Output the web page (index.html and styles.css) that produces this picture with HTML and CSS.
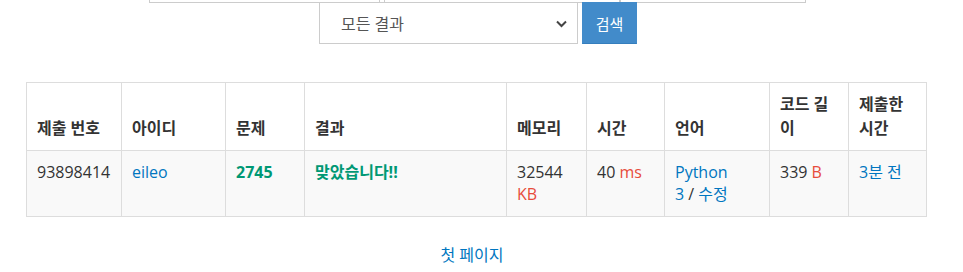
FILE: index.html
```html
<!DOCTYPE html>
<html lang="ko">
<head>
    <meta charset="UTF-8">
    <title>채점 현황</title>
    <link rel="stylesheet" href="styles.css">
</head>
<body>
    <div class="container">
        <div class="filter-row">
            <div class="filter-box box-1"></div>
            <div class="filter-box box-2"></div>
            <div class="filter-box box-3"></div>
        </div>
        <div class="search-row">
            <div class="result-select">
                <span>모든 결과</span>
                <svg class="chevron" width="11" height="8" viewBox="0 0 11 8"><path d="M1 1.5 L5.5 6 L10 1.5" fill="none" stroke="#444" stroke-width="2"/></svg>
            </div>
            <button class="search-btn">검색</button>
        </div>

        <table class="status-table">
            <colgroup>
                <col style="width: 95px">
                <col style="width: 104px">
                <col style="width: 79px">
                <col style="width: 202px">
                <col style="width: 80px">
                <col style="width: 78px">
                <col style="width: 105px">
                <col style="width: 79px">
                <col style="width: 78px">
            </colgroup>
            <thead>
                <tr>
                    <th>제출 번호</th>
                    <th>아이디</th>
                    <th>문제</th>
                    <th>결과</th>
                    <th>메모리</th>
                    <th>시간</th>
                    <th>언어</th>
                    <th>코드 길이</th>
                    <th>제출한 시간</th>
                </tr>
            </thead>
            <tbody>
                <tr>
                    <td>93898414</td>
                    <td><a href="#" class="link">eileo</a></td>
                    <td><a href="#" class="problem">2745</a></td>
                    <td><span class="ac">맞았습니다!!</span></td>
                    <td>32544 <span class="unit">KB</span></td>
                    <td>40 <span class="unit">ms</span></td>
                    <td><a href="#" class="link">Python<br>3</a> / <a href="#" class="link">수정</a></td>
                    <td>339 <span class="unit">B</span></td>
                    <td><a href="#" class="link">3분 전</a></td>
                </tr>
            </tbody>
        </table>

        <div class="pager"><a href="#" class="link">첫 페이지</a></div>
    </div>
</body>
</html>
```

FILE: styles.css
```css
body {
    margin: 0;
    font-family: 'Open Sans', 'Noto Sans CJK KR', sans-serif;
    font-size: 16px;
    color: #333;
    background-color: #fff;
}
.container {
    width: 900px;
    margin-left: 26px;
}
.filter-row {
    display: flex;
    height: 3px;
    margin-left: 123px;
}
.filter-box {
    height: 2px;
    border: 1px solid #ccc;
    border-top: none;
}
.box-1 {
    width: 229px;
}
.box-2 {
    width: 234px;
    margin-left: 4px;
}
.box-3 {
    width: 184px;
}
.search-row {
    display: flex;
    justify-content: center;
    gap: 4px;
    margin-left: 4px;
    height: 42px;
}
.result-select {
    display: flex;
    align-items: center;
    justify-content: space-between;
    box-sizing: border-box;
    width: 259px;
    height: 42px;
    margin-top: -1px;
    padding: 0 10px 0 21px;
    border: 1px solid #ccc;
    color: #555;
    font-size: 16px;
}
.chevron {
    margin-top: 1px;
}
.search-btn {
    width: 55px;
    height: 42px;
    margin-top: -1px;
    padding: 0;
    background-color: #428bca;
    border: 1px solid #428bca;
    border-bottom-color: #357ebd;
    color: #fff;
    font-family: 'Noto Sans CJK KR', sans-serif;
    font-size: 15px;
}
.status-table {
    width: 900px;
    margin-top: 37px;
    border-collapse: collapse;
    table-layout: fixed;
}
.status-table th,
.status-table td {
    border: 1px solid #ddd;
    padding: 10px;
    text-align: left;
}
.status-table th {
    font-weight: bold;
    vertical-align: bottom;
    line-height: 24px;
    padding-top: 9px;
}
.status-table td {
    vertical-align: top;
    line-height: 22px;
    background-color: #f9f9f9;
    padding-bottom: 11px;
}
.link {
    color: #0076c0;
    text-decoration: none;
}
.problem {
    color: #009874;
    font-weight: bold;
    text-decoration: none;
}
.ac {
    color: #009874;
    font-weight: bold;
}
.unit {
    color: #e74c3c;
}
.pager {
    text-align: center;
    margin-top: 25px;
    margin-right: 8px;
}
```
